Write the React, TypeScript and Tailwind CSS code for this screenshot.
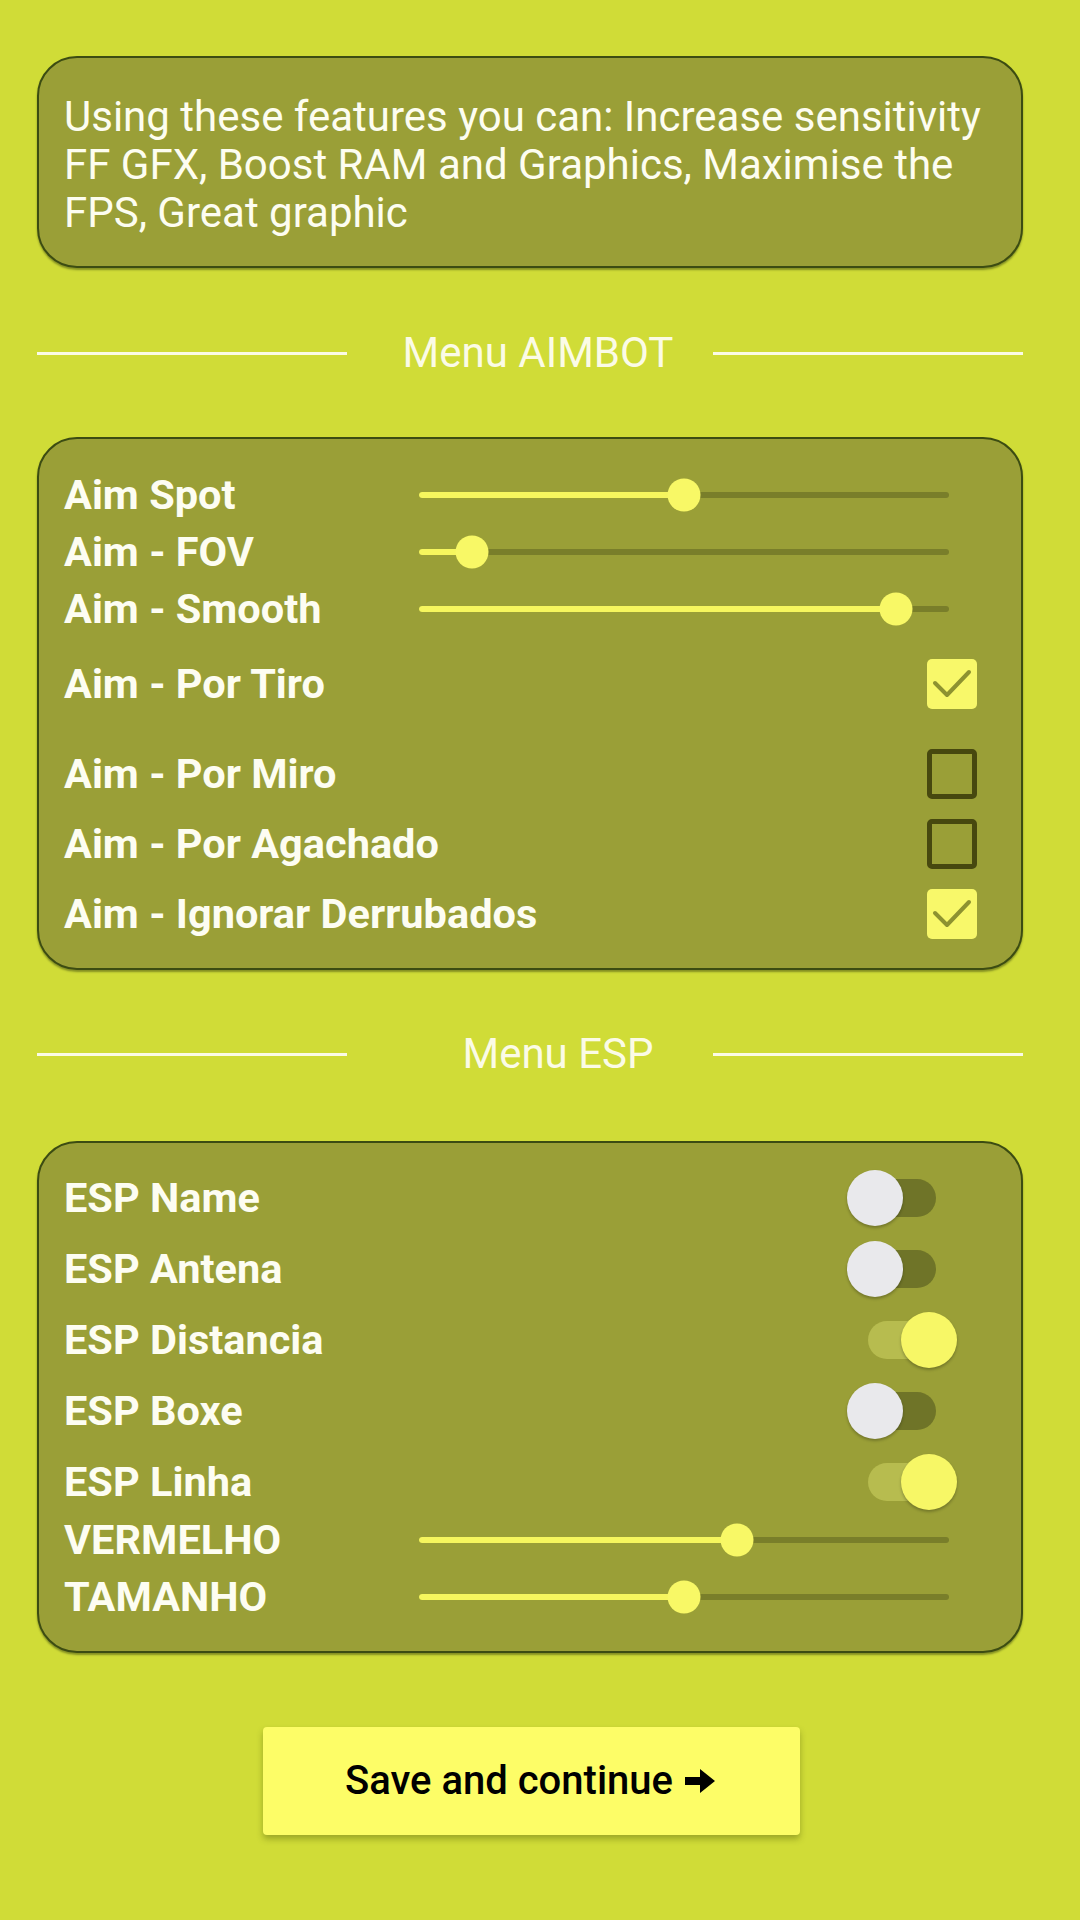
import React from "react";

type SliderProps = { value: number };

// Material-ish slider: active part yellow, thumb sits on top of the track
const Slider = ({ value }: SliderProps) => (
  <div className="relative w-[530px] h-[6px] rounded-full bg-[#797e2a]">
    <div
      className="absolute left-0 top-0 h-full rounded-full bg-[#f6f65e]"
      style={{ width: `${value}%` }}
    />
    <div
      className="absolute top-1/2 w-[33px] h-[33px] -translate-x-1/2 -translate-y-1/2 rounded-full bg-[#f8f866]"
      style={{ left: `${value}%` }}
    />
  </div>
);

const Checkbox = ({ checked }: { checked: boolean }) =>
  checked ? (
    <div className="w-[50px] h-[50px] rounded-[5px] bg-[#f8f86a] flex items-center justify-center">
      <svg width="50" height="50" viewBox="0 0 50 50" fill="none">
        <path
          d="M8 24 L20 36 L42 13"
          stroke="#8d9230"
          strokeWidth="4"
          strokeLinecap="round"
          strokeLinejoin="round"
        />
      </svg>
    </div>
  ) : (
    <div className="w-[50px] h-[50px] rounded-[5px] border-[5px] border-[#47480f]" />
  );

const Switch = ({ on }: { on: boolean }) => (
  <div
    className={`relative w-[68px] h-[38px] rounded-full ${
      on ? "bg-[#b7bc4f]" : "bg-[#6f7428]"
    }`}
  >
    <div
      className={`absolute top-[-9px] w-[56px] h-[56px] rounded-full shadow-[0_2px_3px_rgba(0,0,0,0.25)] ${
        on ? "right-[-21px] bg-[#f7f766]" : "left-[-21px] bg-[#e9e9ec]"
      }`}
    />
  </div>
);

const Divider = ({ title, shift }: { title: string; shift: string }) => (
  <div className="flex items-center h-[50px]">
    <div className="w-[310px] h-[3px] bg-[#fbfbe6]" />
    <div className={`flex-1 text-center ${shift} text-[42px] leading-none text-[#fbfbe6] whitespace-nowrap`}>
      {title}
    </div>
    <div className="w-[310px] h-[3px] bg-[#fbfbe6]" />
  </div>
);

const cardCls =
  "w-full rounded-[40px] border-2 border-[#3c4c12] bg-[#9a9f37] shadow-[0_2px_2px_rgba(40,50,10,0.45)]";

const labelCls = "text-[41.5px] font-bold text-[#fdfdf2] leading-none whitespace-nowrap";

const SliderRow = ({ label, value }: { label: string; value: number }) => (
  <div className="flex items-center h-[57px]">
    <div className={`w-[355px] ${labelCls}`}>{label}</div>
    <Slider value={value} />
  </div>
);

const CheckRow = ({ label, checked, className = "" }: { label: string; checked: boolean; className?: string }) => (
  <div className={`flex items-center justify-between h-[70px] pr-[44px] ${className}`}>
    <div className={labelCls}>{label}</div>
    <Checkbox checked={checked} />
  </div>
);

const SwitchRow = ({ label, on }: { label: string; on: boolean }) => (
  <div className="flex items-center justify-between h-[71px] pr-[85px]">
    <div className={labelCls}>{label}</div>
    <Switch on={on} />
  </div>
);

export default function App() {
  return (
    <div className="w-[1080px] min-h-[1920px] bg-[#d0dc37] pt-[56px] font-['Roboto',sans-serif]">
      <div className="ml-[37px] w-[986px]">
        <div className={`${cardCls} pl-[25px] pr-[20px] pt-[35px] pb-[29px]`}>
          <p className="text-[42px] leading-[48px] text-[#fdfdf0]">
            Using these features you can: Increase sensitivity FF GFX, Boost RAM and Graphics, Maximise the FPS, Great graphic
          </p>
        </div>

        <div className="mt-[60px]">
          <Divider title="Menu AIMBOT" shift="pl-[16px]" />
        </div>

        <div className={`mt-[59px] ${cardCls} pl-[25px] pt-[27px] pb-[19px]`}>
          <SliderRow label="Aim Spot" value={50} />
          <SliderRow label="Aim - FOV" value={10} />
          <SliderRow label="Aim - Smooth" value={90} />
          <CheckRow label="Aim - Por Tiro" checked className="mt-[12px]" />
          <CheckRow label="Aim - Por Miro" checked={false} className="mt-[20px]" />
          <CheckRow label="Aim - Por Agachado" checked={false} />
          <CheckRow label="Aim - Ignorar Derrubados" checked />
        </div>

        <div className="mt-[59px]">
          <Divider title="Menu ESP" shift="pl-[56px]" />
        </div>

        <div className={`mt-[62px] ${cardCls} pl-[25px] pt-[19px] pb-[26px]`}>
          <SwitchRow label="ESP Name" on={false} />
          <SwitchRow label="ESP Antena" on={false} />
          <SwitchRow label="ESP Distancia" on />
          <SwitchRow label="ESP Boxe" on={false} />
          <SwitchRow label="ESP Linha" on />
          <div className="-mt-[6px]">
            <SliderRow label="VERMELHO" value={60} />
            <SliderRow label="TAMANHO" value={50} />
          </div>
        </div>
      </div>

      <div className="mt-[74px] flex justify-center pr-[18px]">
        <button className="w-[537px] h-[108px] rounded-[4px] bg-[#fdfd67] shadow-[0_4px_6px_rgba(60,70,10,0.35)] flex items-center justify-center gap-[10px] text-[40px] font-medium text-black">
          <span>Save and continue</span>
          <svg width="34" height="28" viewBox="0 0 34 28">
            <path d="M2 10 H17 V2 L32 14 L17 26 V18 H2 Z" fill="#000" />
          </svg>
        </button>
      </div>
    </div>
  );
}
